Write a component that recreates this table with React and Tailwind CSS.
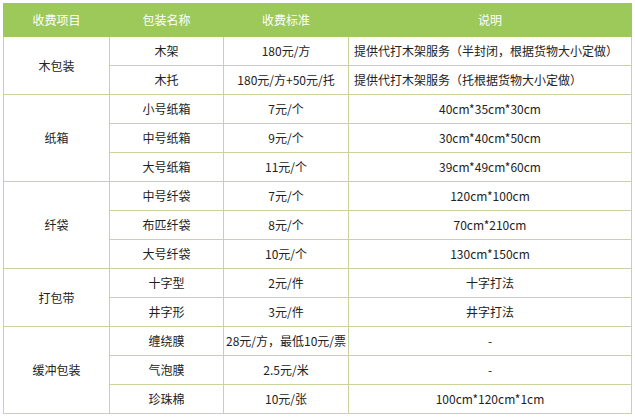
import React from 'react'

const groups = [
  {
    name: '木包装',
    items: [
      ['木架', '180元/方', '提供代打木架服务（半封闭，根据货物大小定做）', true],
      ['木托', '180元/方+50元/托', '提供代打木架服务（托根据货物大小定做）', true],
    ],
  },
  {
    name: '纸箱',
    items: [
      ['小号纸箱', '7元/个', '40cm*35cm*30cm'],
      ['中号纸箱', '9元/个', '30cm*40cm*50cm'],
      ['大号纸箱', '11元/个', '39cm*49cm*60cm'],
    ],
  },
  {
    name: '纤袋',
    items: [
      ['中号纤袋', '7元/个', '120cm*100cm'],
      ['布匹纤袋', '8元/个', '70cm*210cm'],
      ['大号纤袋', '10元/个', '130cm*150cm'],
    ],
  },
  {
    name: '打包带',
    items: [
      ['十字型', '2元/件', '十字打法'],
      ['井字形', '3元/件', '井字打法'],
    ],
  },
  {
    name: '缓冲包装',
    items: [
      ['缠绕膜', '28元/方，最低10元/票', '-'],
      ['气泡膜', '2.5元/米', '-'],
      ['珍珠棉', '10元/张', '100cm*120cm*1cm'],
    ],
  },
]

const td = 'border border-[#cdd1a0] h-[29px] p-0 text-center align-middle whitespace-nowrap overflow-visible'

export default function App() {
  return (
    <div className="bg-white w-[635px] h-[417px] pl-[3px] pt-[3px] text-[12px] leading-none text-[#222]" style={{ fontFamily: '"Noto Sans CJK SC", "Liberation Sans", sans-serif' }}>
      <table className="table-fixed border-collapse w-[628px]">
        <colgroup>
          <col className="w-[106px]" />
          <col className="w-[114px]" />
          <col className="w-[125px]" />
          <col className="w-[283px]" />
        </colgroup>
        <thead>
          <tr className="bg-[#9dc95b] text-white">
            <th className="h-[33px] font-normal border border-[#9dc95b]">收费项目</th>
            <th className="h-[33px] font-normal border border-[#9dc95b]">包装名称</th>
            <th className="h-[33px] font-normal border border-[#9dc95b]">收费标准</th>
            <th className="h-[33px] font-normal border border-[#9dc95b]">说明</th>
          </tr>
        </thead>
        <tbody>
          {groups.map((g) =>
            g.items.map((it, i) => (
              <tr key={g.name + i}>
                {i === 0 && (
                  <td rowSpan={g.items.length} className={td}>{g.name}</td>
                )}
                <td className={td}>{it[0]}</td>
                <td className={td}>{it[1]}</td>
                <td className={it[3] ? td + ' !text-left pl-[5px]' : td}>{it[2]}</td>
              </tr>
            ))
          )}
        </tbody>
      </table>
    </div>
  )
}
